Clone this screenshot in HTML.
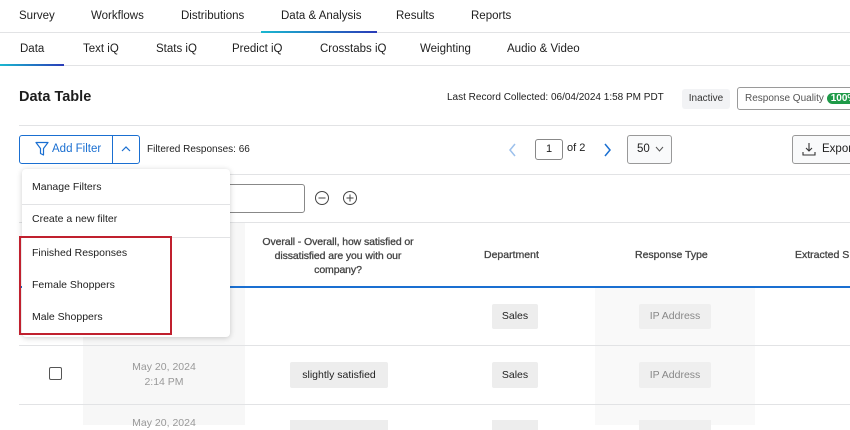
<!DOCTYPE html>
<html><head><style>
*{box-sizing:border-box;margin:0;padding:0}
body{width:850px;height:425px;overflow:hidden;background:#fff;font-family:"Liberation Sans",sans-serif;color:#1e1e1e;position:relative;font-size:11px}
.a{position:absolute;white-space:nowrap}
.hl{position:absolute;height:1px;background:#e2e3e5}
</style></head><body>
<!-- top nav -->
<div class="a" style="top:10px;left:19px;font-size:11.5px">Survey</div>
<div class="a" style="top:10px;left:91px;font-size:11.5px">Workflows</div>
<div class="a" style="top:10px;left:181px;font-size:11.5px">Distributions</div>
<div class="a" style="top:10px;left:281px;font-size:11.5px">Data &amp; Analysis</div>
<div class="a" style="top:10px;left:396px;font-size:11.5px">Results</div>
<div class="a" style="top:10px;left:471px;font-size:11.5px">Reports</div>
<div class="hl" style="top:32px;left:0;width:850px"></div>
<div class="a" style="top:31px;left:261px;width:116px;height:2px;background:linear-gradient(90deg,#1ab8d0,#2a3bb8)"></div>
<!-- sub nav -->
<div class="a" style="top:43px;left:20px;font-size:11.5px">Data</div>
<div class="a" style="top:43px;left:83px;font-size:11.5px">Text iQ</div>
<div class="a" style="top:43px;left:156px;font-size:11.5px">Stats iQ</div>
<div class="a" style="top:43px;left:232px;font-size:11.5px">Predict iQ</div>
<div class="a" style="top:43px;left:320px;font-size:11.5px">Crosstabs iQ</div>
<div class="a" style="top:43px;left:420px;font-size:11.5px">Weighting</div>
<div class="a" style="top:43px;left:507px;font-size:11.5px">Audio &amp; Video</div>
<div class="hl" style="top:65px;left:0;width:850px"></div>
<div class="a" style="top:64px;left:0;width:64px;height:2px;background:linear-gradient(90deg,#1ab8d0,#2a3bb8)"></div>
<!-- title -->
<div class="a" style="top:89px;left:19px;font-size:14.5px;font-weight:bold">Data Table</div>
<div class="a" style="top:92px;left:447px;font-size:10px">Last Record Collected: 06/04/2024 1:58 PM PDT</div>
<div class="a" style="top:89px;left:682px;width:48px;height:20px;background:#f2f3f5;border-radius:3px;font-size:10px;line-height:20px;text-align:center;color:#333">Inactive</div>
<div class="a" style="top:87px;left:737px;width:120px;height:23px;border:1px solid #9a9a9a;border-radius:3px;font-size:10px;line-height:21px;padding-left:7px;color:#555">Response Quality <span style="background:#1e9a48;color:#fff;border-radius:8px;padding:0 4px;font-weight:bold">100%</span></div>
<div class="hl" style="top:125px;left:19px;width:831px"></div>
<!-- filter button -->
<div class="a" style="top:135px;left:19px;width:121px;height:29px;border:1px solid #1a6fd1;border-radius:3px"></div>
<div class="a" style="top:135px;left:112px;width:1px;height:29px;background:#1a6fd1"></div>
<svg class="a" style="top:141px;left:35px" width="14" height="16" viewBox="0 0 14 16"><path d="M1 1.5h12L8.5 7.5V14l-3-1.5V7.5z" fill="none" stroke="#1a6fd1" stroke-width="1.2" stroke-linejoin="round"/></svg>
<div class="a" style="top:143px;left:52px;font-size:11.5px;color:#1a6fd1">Add Filter</div>
<svg class="a" style="top:145px;left:121px" width="10" height="8"><path d="M1 6l4-4 4 4" fill="none" stroke="#1a6fd1" stroke-width="1.2"/></svg>
<div class="a" style="top:144px;left:147px;font-size:10px">Filtered Responses: 66</div>
<!-- pagination -->
<svg class="a" style="top:143px;left:509px" width="8" height="14"><path d="M6 1L1 7l5 6" fill="none" stroke="#9cc0ec" stroke-width="1.5"/></svg>
<div class="a" style="top:139px;left:535px;width:28px;height:21px;border:1px solid #888;border-radius:3px;text-align:center;line-height:19px;font-size:11px">1</div>
<div class="a" style="top:142px;left:567px;font-size:11px">of 2</div>
<svg class="a" style="top:143px;left:603px" width="8" height="14"><path d="M2 1l5 6-5 6" fill="none" stroke="#1a6fd1" stroke-width="1.5"/></svg>
<div class="a" style="top:135px;left:627px;width:45px;height:29px;border:1px solid #999;border-radius:3px;background:#f9fafb;font-size:11.5px;line-height:27px;padding-left:9px">50 <svg width="9" height="6" style="margin-left:2px"><path d="M1 1l3.5 4L8 1" fill="none" stroke="#555" stroke-width="1"/></svg></div>
<div class="a" style="top:135px;left:792px;width:70px;height:29px;border:1px solid #999;border-radius:3px;background:#f9fafb;font-size:11.5px;line-height:27px;padding-left:29px">Export</div>
<svg class="a" style="top:142px;left:802px" width="14" height="14"><path d="M7 1v8M4 6l3 3 3-3M1 10v3h12v-3" fill="none" stroke="#333" stroke-width="1.1"/></svg>
<div class="hl" style="top:174px;left:230px;width:620px"></div>
<!-- search row -->
<div class="a" style="top:184px;left:200px;width:105px;height:29px;border:1px solid #888;border-radius:3px"></div>
<svg class="a" style="top:190px;left:314px" width="16" height="16"><circle cx="8" cy="8" r="6.5" fill="none" stroke="#444" stroke-width="1"/><path d="M4.5 8h7" stroke="#444"/></svg>
<svg class="a" style="top:190px;left:342px" width="16" height="16"><circle cx="8" cy="8" r="6.5" fill="none" stroke="#444" stroke-width="1"/><path d="M4.5 8h7M8 4.5v7" stroke="#444"/></svg>
<!-- table -->
<div class="a" style="top:222px;left:83px;width:162px;height:203px;background:#f7f7f7"></div>
<div class="a" style="top:288px;left:595px;width:160px;height:137px;background:#f9f9f9"></div>
<div class="hl" style="top:222px;left:19px;width:831px"></div>
<div class="a" style="top:235px;left:255px;width:166px;text-align:center;font-size:10.5px;color:#444;line-height:14px;white-space:normal;-webkit-text-stroke:0.3px #444;letter-spacing:-0.1px">Overall - Overall, how satisfied or dissatisfied are you with our company?</div>
<div class="a" style="top:249px;left:484px;font-size:10.5px;color:#444;-webkit-text-stroke:0.3px #444">Department</div>
<div class="a" style="top:249px;left:635px;font-size:10.5px;color:#444;-webkit-text-stroke:0.3px #444">Response Type</div>
<div class="a" style="top:249px;left:795px;font-size:10.5px;color:#444;-webkit-text-stroke:0.3px #444">Extracted S</div>
<div class="a" style="top:286px;left:19px;width:831px;height:2px;background:#1a6fd1"></div>
<div class="hl" style="top:345px;left:19px;width:831px"></div>
<div class="hl" style="top:404px;left:19px;width:831px"></div>
<div class="a" style="top:304px;left:492px;width:46px;height:25px;background:#ededed;border-radius:2px;text-align:center;line-height:25px;font-size:10.5px">Sales</div>
<div class="a" style="top:304px;left:639px;width:72px;height:25px;background:#efefef;border-radius:2px;text-align:center;line-height:25px;font-size:10.5px;color:#888">IP Address</div>
<div class="a" style="top:367px;left:49px;width:13px;height:13px;border:1px solid #555;border-radius:2px"></div>
<div class="a" style="top:360px;left:83px;width:162px;text-align:center;font-size:10.5px;color:#999;line-height:15px">May 20, 2024<br>2:14 PM</div>
<div class="a" style="top:362px;left:290px;width:98px;height:26px;background:#ededed;border-radius:2px;text-align:center;line-height:26px;font-size:10.5px">slightly satisfied</div>
<div class="a" style="top:362px;left:492px;width:46px;height:26px;background:#ededed;border-radius:2px;text-align:center;line-height:26px;font-size:10.5px">Sales</div>
<div class="a" style="top:362px;left:639px;width:72px;height:26px;background:#efefef;border-radius:2px;text-align:center;line-height:26px;font-size:10.5px;color:#888">IP Address</div>
<div class="a" style="top:417px;left:83px;width:162px;text-align:center;font-size:10.5px;color:#999">May 20, 2024</div>
<div class="a" style="top:420px;left:290px;width:98px;height:10px;background:#ededed"></div>
<div class="a" style="top:420px;left:492px;width:46px;height:10px;background:#ededed"></div>
<div class="a" style="top:420px;left:639px;width:72px;height:10px;background:#efefef"></div>
<!-- dropdown -->
<div class="a" style="top:169px;left:22px;width:208px;height:168px;background:#fff;border-radius:4px;box-shadow:0 1px 6px rgba(0,0,0,.2)"></div>
<div class="a" style="top:181px;left:32px;font-size:10.5px">Manage Filters</div>
<div class="hl" style="top:204px;left:22px;width:208px"></div>
<div class="a" style="top:213px;left:32px;font-size:10.5px">Create a new filter</div>
<div class="hl" style="top:237px;left:22px;width:208px"></div>
<div class="a" style="top:247px;left:32px;font-size:10.5px">Finished Responses</div>
<div class="a" style="top:279px;left:32px;font-size:10.5px">Female Shoppers</div>
<div class="a" style="top:311px;left:32px;font-size:10.5px">Male Shoppers</div>
<div class="a" style="top:236px;left:19px;width:153px;height:99px;border:2px solid #c0202e"></div>
</body></html>
